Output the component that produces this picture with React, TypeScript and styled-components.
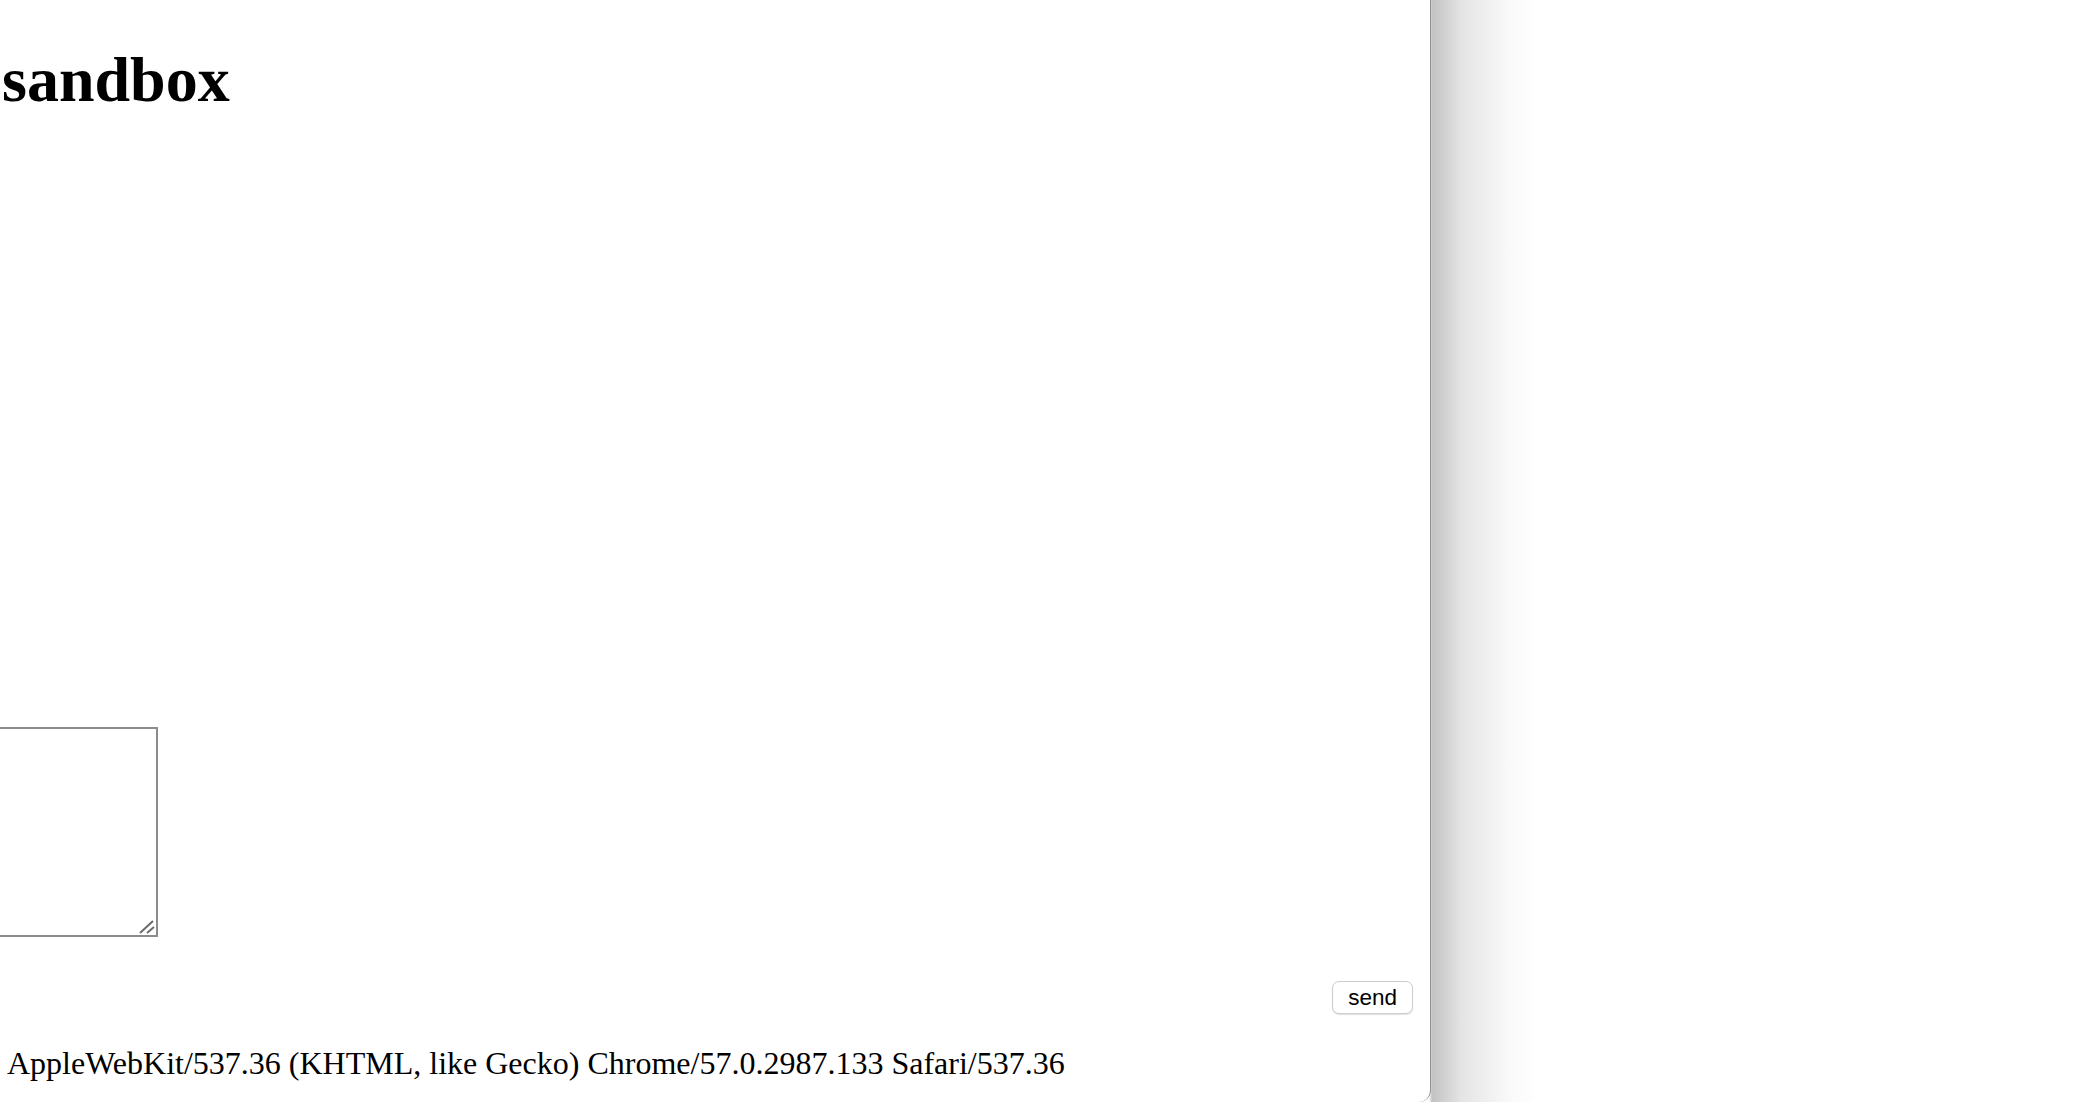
import React from 'react';
import styled, { createGlobalStyle } from 'styled-components';

const GlobalStyle = createGlobalStyle`
	html,
	body {
		margin: 0;
		padding: 0;
		background: #fff;
		overflow: hidden;
	}
`;

const Page = styled.div`
	display: flex;
	width: 2100px;
	height: 1102px;
	background: linear-gradient(
		to right,
		#fff 0,
		#fff 1429px,
		#c2c2c2 1432px,
		#e4e4e4 1461px,
		#fafafa 1511px,
		#fff 1541px
	);
`;

const Panel = styled.div`
	display: flex;
	flex-direction: column;
	width: 1431px;
	height: 1102px;
	box-sizing: border-box;
	background: #fff;
	border-right: 1px solid #8f8f8f;
	border-bottom-right-radius: 12px;
`;

const Title = styled.h1`
	margin: 44px 0 0;
	padding-left: 2px;
	font-family: 'Liberation Serif', 'Times New Roman', serif;
	font-weight: bold;
	font-size: 64px;
	line-height: 72px;
	color: #000;
`;

const EditorBox = styled.div`
	position: relative;
	width: 158px;
	height: 210px;
	margin-top: 611px;
`;

const MessageInput = styled.textarea`
	display: block;
	width: 100%;
	height: 100%;
	box-sizing: border-box;
	margin: 0;
	padding: 0;
	border: 2px solid #8c8c8c;
	border-left: none;
	background: #fff;
	resize: none;
	outline: none;
`;

const Grip = styled.svg`
	position: absolute;
	right: 2px;
	bottom: 2px;
	width: 20px;
	height: 20px;
	pointer-events: none;
`;

const ButtonRow = styled.div`
	display: flex;
	justify-content: flex-end;
	margin-top: 44px;
	padding-right: 17px;
`;

const SendButton = styled.button`
	height: 33px;
	padding: 0 15px;
	box-sizing: border-box;
	border: 1px solid #cdcdcd;
	border-radius: 7px;
	background: #fff;
	box-shadow: 0 1px 1px rgba(0, 0, 0, 0.12);
	font-family: 'Liberation Sans', Arial, sans-serif;
	font-size: 22.5px;
	line-height: 31px;
	color: #000;
`;

const AgentLine = styled.div`
	margin-top: 31px;
	padding-left: 7px;
	font-family: 'Liberation Serif', 'Times New Roman', serif;
	font-size: 32px;
	line-height: 36px;
	color: #000;
	white-space: nowrap;
`;

const App: React.FC = () => {
	return (
		<>
			<GlobalStyle />
			<Page>
				<Panel>
					<Title>sandbox</Title>
					<EditorBox>
						<MessageInput />
						<Grip viewBox="0 0 20 20">
							<line x1="4" y1="18" x2="17" y2="6" stroke="#6b6b6b" strokeWidth="2" />
							<line x1="11" y1="18" x2="18" y2="12" stroke="#6b6b6b" strokeWidth="2" />
						</Grip>
					</EditorBox>
					<ButtonRow>
						<SendButton>send</SendButton>
					</ButtonRow>
					<AgentLine>
						AppleWebKit/537.36 (KHTML, like Gecko) Chrome/57.0.2987.133 Safari/537.36
					</AgentLine>
				</Panel>
			</Page>
		</>
	);
};

export default App;
